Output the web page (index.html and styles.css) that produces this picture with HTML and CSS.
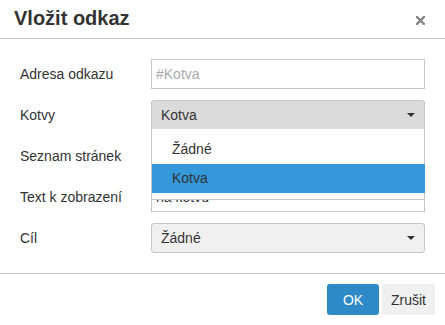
FILE: index.html
```html
<!DOCTYPE html>
<html lang="cs">
<head>
    <meta charset="UTF-8">
    <title>Vložit odkaz</title>
    <link rel="stylesheet" href="styles.css">
</head>
<body>
    <div class="dialog">
        <div class="dialog-head">
            <div class="dialog-title">Vložit odkaz</div>
            <svg class="dialog-close" width="9" height="9" viewBox="0 0 9 9">
                <path d="M1 1 L8 8 M8 1 L1 8" stroke="#858585" stroke-width="2.4" stroke-linecap="square"/>
            </svg>
        </div>
        <div class="dialog-body">
            <div class="form-row">
                <label class="form-label">Adresa odkazu</label>
                <input type="text" class="form-input" placeholder="#Kotva">
            </div>
            <div class="form-row">
                <label class="form-label">Kotvy</label>
                <div class="select-wrap">
                    <div class="form-select is-open">
                        <span>Kotva</span>
                        <i class="caret"></i>
                    </div>
                    <ul class="select-menu">
                        <li>Žádné</li>
                        <li class="active">Kotva</li>
                    </ul>
                </div>
            </div>
            <div class="form-row">
                <label class="form-label">Seznam stránek</label>
                <div class="form-select">
                    <span></span>
                    <i class="caret"></i>
                </div>
            </div>
            <div class="form-row">
                <label class="form-label">Text k zobrazení</label>
                <input type="text" class="form-input" value="na kotvu">
            </div>
            <div class="form-row">
                <label class="form-label">Cíl</label>
                <div class="form-select">
                    <span>Žádné</span>
                    <i class="caret"></i>
                </div>
            </div>
        </div>
        <div class="dialog-foot">
            <button class="btn btn-primary">OK</button>
            <button class="btn">Zrušit</button>
        </div>
    </div>
</body>
</html>
```

FILE: styles.css
```css
* {
    margin: 0;
    padding: 0;
    box-sizing: border-box;
}
body {
    font-family: "Liberation Sans", Arial, sans-serif;
    font-size: 14px;
    color: #333;
    background: #fff;
}
.dialog {
    width: 445px;
    height: 325px;
    display: flex;
    flex-direction: column;
}
.dialog-head {
    height: 39px;
    display: flex;
    align-items: center;
    justify-content: space-between;
    padding: 0 20px 0 14px;
    border-bottom: 1px solid #c5c5c5;
}
.dialog-title {
    font-size: 20px;
    font-weight: bold;
    color: #333;
    padding-bottom: 1px;
}
.dialog-close {
    margin-top: 2px;
}
.dialog-body {
    padding: 20px;
    display: flex;
    flex-direction: column;
    gap: 11px;
    border-bottom: 1px solid #c5c5c5;
}
.form-row {
    display: flex;
    align-items: center;
    height: 30px;
}
.form-label {
    width: 131px;
    flex: none;
}
.form-input {
    flex: 1;
    height: 30px;
    border: 1px solid #c5c5c5;
    padding: 0 4px;
    font-family: inherit;
    font-size: 14px;
    color: #333;
    outline: 0;
}
.form-input::placeholder {
    color: #aaa;
}
.select-wrap {
    flex: 1;
    position: relative;
}
.form-select {
    flex: 1;
    height: 30px;
    display: flex;
    align-items: center;
    justify-content: space-between;
    padding: 0 9px;
    background: #f0f0f0;
    border: 1px solid #c5c5c5;
    border-radius: 3px;
}
.form-select.is-open {
    background: #dbdbdb;
    border-radius: 3px 3px 0 0;
}
.caret {
    width: 0;
    height: 0;
    border-left: 4px solid transparent;
    border-right: 4px solid transparent;
    border-top: 4px solid #333;
}
.select-menu {
    position: absolute;
    top: 29px;
    left: 0;
    right: 0;
    background: #fff;
    border: 1px solid #c5c5c5;
    border-top: 0;
    padding: 6px 0;
    list-style: none;
    z-index: 2;
}
.select-menu li {
    height: 29px;
    line-height: 29px;
    padding-left: 20px;
}
.select-menu li.active {
    background: #3498db;
    margin-right: -1px;
}
.dialog-foot {
    flex: 1;
    display: flex;
    justify-content: flex-end;
    align-items: flex-start;
    gap: 3px;
    padding: 10px 10px 0 0;
}
.btn {
    width: 53px;
    height: 31px;
    border: 0;
    border-radius: 3px;
    background: #f0f0f0;
    font-family: inherit;
    font-size: 14px;
    color: #333;
}
.btn-primary {
    width: 52px;
    background: #2d8ac7;
    color: #fff;
}
```
